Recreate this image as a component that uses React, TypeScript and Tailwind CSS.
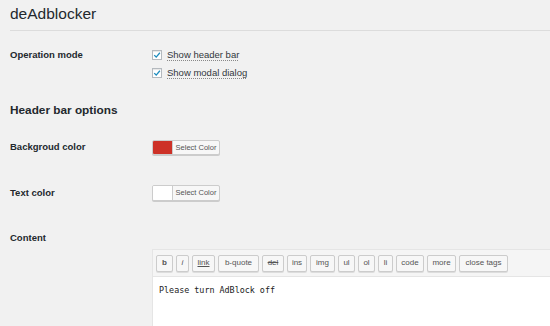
import React from "react";

function Check({ label }: { label: string }) {
  return (
    <div className="flex items-center h-[18px]">
      <span className="w-[10px] h-[10px] bg-white border border-[#b4b9be] flex items-center justify-center shadow-[inset_0_1px_1px_rgba(0,0,0,0.1)]">
        <svg width="8" height="8" viewBox="0 0 10 10">
          <path d="M1.5 5.2 L4 7.6 L8.6 2.2" stroke="#1e8cbe" strokeWidth="1.6" fill="none" />
        </svg>
      </span>
      <span className="ml-[5px] text-[9.5px] text-[#32373c] underline decoration-dotted decoration-[#888] underline-offset-2">
        {label}
      </span>
    </div>
  );
}

function ColorBtn({ color }: { color: string }) {
  return (
    <div className="flex h-full w-[68px] border border-[#ccc] bg-[#f7f7f7] rounded-[2px] shadow-[0_1px_0_#ccc] overflow-hidden">
      <span className="w-[20px] h-full border-r border-[#ccc]" style={{ background: color }} />
      <span className="flex-1 flex items-center justify-center text-[7.5px] text-[#555]">Select Color</span>
    </div>
  );
}

const buttons: [string, number][] = [
  ["b", 17],
  ["i", 13],
  ["link", 23],
  ["b-quote", 41],
  ["del", 22],
  ["ins", 20],
  ["img", 25],
  ["ul", 17],
  ["ol", 17],
  ["li", 15],
  ["code", 28],
  ["more", 29],
  ["close tags", 49],
];

export default function App() {
  return (
    <div className="w-[550px] h-[326px] bg-[#f1f1f1] overflow-hidden font-['Liberation_Sans',Arial,sans-serif] text-[#23282d]">
      <h1 className="pl-[10px] pt-[4px] text-[15.5px] leading-[20px]">deAdblocker</h1>
      <div className="ml-[10px] mt-[6px] border-t border-[#dcdcdc]" />

      <div className="grid grid-cols-[152px_1fr] mt-[15px]">
        <div className="pl-[10px] text-[9.5px] font-bold leading-[18px]">Operation mode</div>
        <div>
          <Check label="Show header bar" />
          <Check label="Show modal dialog" />
        </div>
      </div>

      <h2 className="pl-[10px] mt-[20px] text-[11.8px] font-semibold leading-[16px]">Header bar options</h2>

      <div className="grid grid-cols-[152px_1fr] mt-[22px] h-[15px] items-center">
        <div className="pl-[10px] text-[9.5px] font-bold">Backgroud color</div>
        <div className="h-[15px]">
          <ColorBtn color="#cd3127" />
        </div>
      </div>

      <div className="grid grid-cols-[152px_1fr] mt-[30px] h-[16px] items-center">
        <div className="pl-[10px] text-[9.5px] font-bold">Text color</div>
        <div className="h-[16px]">
          <ColorBtn color="#ffffff" />
        </div>
      </div>

      <div className="grid grid-cols-[152px_1fr] mt-[29px]">
        <div className="pl-[10px] text-[9.5px] font-bold leading-[16px]">Content</div>
        <div />
      </div>

      <div className="ml-[152px] mt-[3px] border-l border-t border-[#e5e5e5]">
        <div className="bg-[#f5f5f5] h-[27px] flex items-center gap-[3px] pl-[3px] border-b border-[#e5e5e5]">
          {buttons.map(([t, w]) => (
            <span
              key={t}
              style={{ width: w }}
              className={
                "h-[17px] flex items-center justify-center bg-[#f7f7f7] border border-[#ccc] rounded-[2px] text-[8px] text-[#555] shadow-[0_1px_0_#ddd] " +
                (t === "link" ? "underline" : "") +
                (t === "del" ? "line-through" : "") +
                (t === "i" ? "italic" : "") +
                (t === "b" ? "font-bold" : "")
              }
            >
              {t}
            </span>
          ))}
        </div>
        <div className="bg-white h-[60px] pl-[6px] pt-[7px] font-['DejaVu_Sans_Mono',monospace] text-[8.4px] leading-[12px] text-[#222]">
          Please turn AdBlock off
        </div>
      </div>
    </div>
  );
}
